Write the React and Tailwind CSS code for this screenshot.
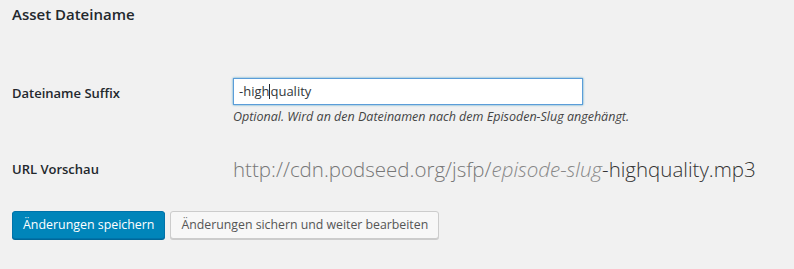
import React from "react";

const App = () => {
    return (
        <div
            className="w-[794px] h-[269px] bg-[#f1f1f1] text-[#23282d] overflow-hidden"
            style={{ fontFamily: '"Open Sans", "Noto Sans", sans-serif' }}
        >
            <div className="pl-3 pt-[2px]">
                {/* heading */}
                <h2 className="text-[15px] leading-[24px] font-semibold text-[#23282d]">Asset Dateiname</h2>

                {/* suffix row */}
                <div className="flex mt-[52px]">
                    <div className="w-[221px] pt-[6px] text-[13px] leading-[18px] font-semibold">
                        Dateiname Suffix
                    </div>
                    <div>
                        <div className="w-[350px] h-[27px] bg-white border border-[#5b9dd9] shadow-[0_0_2px_rgba(30,140,190,0.8)] flex items-center px-[5px] text-[13px] text-[#32373c]">
                            <span>-high</span>
                            <span className="inline-block w-px h-[15px] bg-[#23282d]" />
                            <span>quality</span>
                        </div>
                        <p className="mt-[3px] text-[12.5px] leading-[18px] italic text-[#444]">
                            Optional. Wird an den Dateinamen nach dem Episoden-Slug angehängt.
                        </p>
                    </div>
                </div>

                {/* url preview row */}
                <div className="flex mt-[29px] items-center">
                    <div className="w-[221px] text-[13px] leading-[18px] font-semibold">URL Vorschau</div>
                    <div className="text-[20.5px] leading-[28px] font-light text-[#777]">
                        http://cdn.podseed.org/jsfp/<span className="italic text-[#888]">episode-slug</span>
                        <span className="text-[#333]">-highquality.mp3</span>
                    </div>
                </div>

                {/* buttons */}
                <div className="flex gap-[5px] mt-[28px]">
                    <button className="h-[28px] px-[10px] bg-[#0085ba] border border-[#0073aa] rounded-[3px] text-white text-[12.4px] shadow-[0_1px_0_#006799]">
                        Änderungen speichern
                    </button>
                    <button className="h-[28px] px-[10px] bg-[#f7f7f7] border border-[#ccc] rounded-[3px] text-[#555] text-[12.3px] shadow-[0_1px_0_#ccc]">
                        Änderungen sichern und weiter bearbeiten
                    </button>
                </div>
            </div>
        </div>
    );
};

export default App;
